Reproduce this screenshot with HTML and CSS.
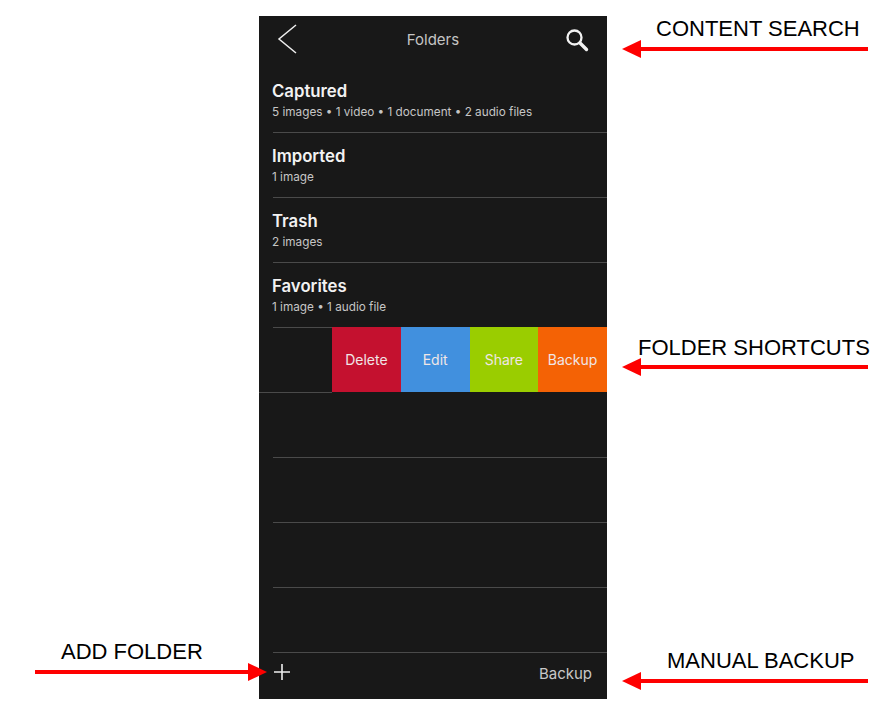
FILE: index.html
```html
<!DOCTYPE html>
<html lang="en">
<head>
    <meta charset="UTF-8">
    <meta name="viewport" content="width=device-width, initial-scale=1.0">
    <title>Folders</title>
    <link rel="stylesheet" href="styles.css">
</head>
<body>
    <div class="screen">
        <header class="topbar">
            <svg class="back-icon" width="22" height="30" viewBox="0 0 22 30"><path d="M19 1 L2 15 L19 29" fill="none" stroke="#eeeeee" stroke-width="1.5"/></svg>
            <span class="topbar-title">Folders</span>
            <svg class="search-icon" width="24" height="24" viewBox="0 0 24 24"><circle cx="9.5" cy="9.5" r="7" fill="none" stroke="#f2f2f2" stroke-width="2.3"/><path d="M15 15 L21.5 21.5" fill="none" stroke="#f2f2f2" stroke-width="3.4" stroke-linecap="round"/></svg>
        </header>

        <div class="row">
            <div class="row-name">Captured</div>
            <div class="row-info">5 images • 1 video • 1 document • 2 audio files</div>
        </div>
        <div class="row">
            <div class="row-name">Imported</div>
            <div class="row-info">1 image</div>
        </div>
        <div class="row">
            <div class="row-name">Trash</div>
            <div class="row-info">2 images</div>
        </div>
        <div class="row">
            <div class="row-name">Favorites</div>
            <div class="row-info">1 image • 1 audio file</div>
        </div>

        <div class="swipe-row">
            <div class="swipe-rest"></div>
            <div class="action action-delete">Delete</div>
            <div class="action action-edit">Edit</div>
            <div class="action action-share">Share</div>
            <div class="action action-backup">Backup</div>
        </div>

        <div class="row"></div>
        <div class="row"></div>
        <div class="row"></div>
        <div class="row"></div>

        <footer class="bottombar">
            <svg class="plus-icon" width="18" height="18" viewBox="0 0 18 18"><path d="M9 1 V17 M1 9 H17" fill="none" stroke="#eeeeee" stroke-width="1.6"/></svg>
            <span class="bottombar-backup">Backup</span>
        </footer>
    </div>

    <div class="note note-search">CONTENT SEARCH</div>
    <div class="note note-shortcuts">FOLDER SHORTCUTS</div>
    <div class="note note-add">ADD FOLDER</div>
    <div class="note note-manual">MANUAL BACKUP</div>

    <div class="arrow arrow-search"></div>
    <div class="arrow arrow-shortcuts"></div>
    <div class="arrow arrow-manual"></div>
    <div class="arrow arrow-add"></div>
</body>
</html>
```

FILE: styles.css
```css
/* General Reset */
* {
    margin: 0;
    padding: 0;
    box-sizing: border-box;
}

body {
    background: #fff;
    font-family: 'Inter', 'Liberation Sans', sans-serif;
    height: 714px;
    overflow: hidden;
    position: relative;
}

/* Phone screen */
.screen {
    width: 348px;
    height: 683px;
    margin: 16px 0 0 259px;
    background: #181818;
    display: flex;
    flex-direction: column;
}

.topbar {
    height: 52px;
    flex: none;
    display: flex;
    align-items: center;
    justify-content: space-between;
    padding: 0 18px 6px 18px;
    position: relative;
}

.search-icon {
    margin-top: 2px;
}

.topbar-title {
    position: absolute;
    left: 0;
    right: 0;
    top: 15px;
    text-align: center;
    font-size: 15px;
    line-height: 18px;
    color: #c4c4c4;
}

.row {
    height: 65px;
    flex: none;
    margin-left: 14px;
    padding-top: 13px;
    border-bottom: 1px solid #4a4a4a;
}

.row-name {
    font-size: 16.75px;
    line-height: 20px;
    font-weight: 600;
    color: #f2f2f2;
    margin-left: -1px;
}

.row-info {
    font-size: 11.75px;
    line-height: 14px;
    margin: 4px 0 0 -1px;
    color: #c6c6c6;
}

/* the action colours sit on top of the line above them */
.swipe-row {
    height: 66px;
    margin-top: -1px;
    flex: none;
    display: flex;
    align-items: flex-start;
}

.swipe-rest {
    width: 73px;
    height: 66px;
    border-bottom: 1px solid #4a4a4a;
}

.action {
    width: 68.75px;
    height: 65px;
    display: flex;
    align-items: center;
    justify-content: center;
    font-size: 14px;
    color: #f0e6e6;
}

.action-delete { background: #c4112f; }
.action-edit { background: #4190de; }
.action-share { background: #9acd00; }
.action-backup { background: #f46205; }

.bottombar {
    flex: 1;
    display: flex;
    align-items: center;
    justify-content: space-between;
    padding: 0 15px 6px 14px;
}

.plus-icon {
    margin-bottom: 2px;
}

.bottombar-backup {
    font-size: 15px;
    color: #c8c8c8;
}

/* Notes around the screen */
.note {
    position: absolute;
    font-family: 'Liberation Sans', Arial, sans-serif;
    font-size: 22px;
    line-height: 26px;
    color: #000;
    white-space: nowrap;
}

.note-search { left: 656px; top: 16px; }
.note-shortcuts { left: 638px; top: 335px; }
.note-add { left: 61px; top: 639px; }
.note-manual { left: 667px; top: 648px; }

.arrow {
    position: absolute;
    height: 4px;
    background: #fe0000;
}

.arrow::before {
    content: "";
    position: absolute;
    top: -7.5px;
    border-top: 9.5px solid transparent;
    border-bottom: 9.5px solid transparent;
}

.arrow-search { left: 641px; top: 47px; width: 227px; }
.arrow-shortcuts { left: 641px; top: 365px; width: 227px; }
.arrow-manual { left: 641px; top: 679px; width: 227px; }
.arrow-add { left: 35px; top: 670px; width: 213px; }

.arrow-search::before,
.arrow-shortcuts::before,
.arrow-manual::before {
    left: -19px;
    border-right: 19px solid #fe0000;
}

.arrow-add::before {
    right: -19px;
    border-left: 19px solid #fe0000;
}
```
